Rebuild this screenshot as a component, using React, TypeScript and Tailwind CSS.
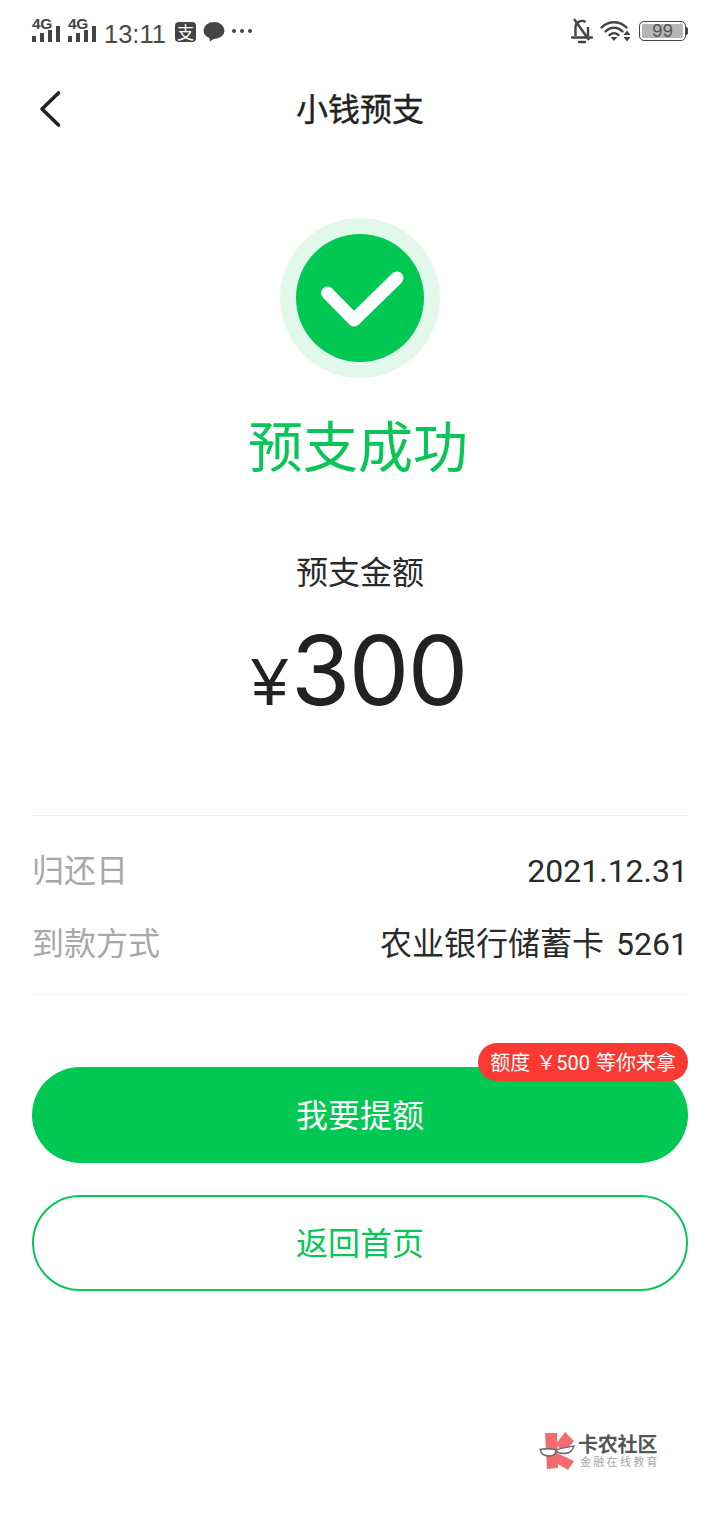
const F = "font-['Inter','Noto_Sans_CJK_SC',sans-serif]";
const R = "font-['Roboto','Noto_Sans_CJK_SC',sans-serif]";

function Signal() {
  return (
    <div className="relative w-[29px] h-[25px]">
      <span className="absolute left-0 top-[-2px] text-[15.5px] leading-[15px] font-bold text-[#444] font-['Liberation_Sans',sans-serif] tracking-[-0.3px]">4G</span>
      <svg width="29" height="25" viewBox="0 0 29 25" className="absolute left-0 top-0" fill="#444">
        <rect x="0" y="18" width="4" height="6" />
        <rect x="8" y="15" width="4" height="9" />
        <rect x="16" y="12" width="4" height="12" />
        <rect x="24" y="8" width="4" height="16" />
      </svg>
    </div>
  );
}

function StatusBar() {
  return (
    <div className="h-[64px] px-[32px] flex items-center justify-between text-[#444]">
      <div className="flex items-center">
        <div className="flex gap-[7px] mt-[-4px]">
          <Signal />
          <Signal />
        </div>
        <span className="ml-[7px] text-[25.500px] leading-[30px] mt-[3px] font-['Liberation_Sans',sans-serif] text-[#4a4a4a]">13:11</span>
        <div className="ml-[9px] mt-[-1px] w-[21px] h-[20px] rounded-[4px] bg-[#444] flex items-center justify-center text-white text-[17px] leading-none font-['Noto_Sans_CJK_SC',sans-serif]">支</div>
        <svg className="ml-[7px] mt-[-1px]" width="22" height="21" viewBox="0 0 22 21" fill="#444">
          <ellipse cx="11" cy="9.500" rx="10.500" ry="8.500" />
          <path d="M6 15l1 5.500 6-4z" />
        </svg>
        <div className="ml-[7px] flex gap-[4px] mt-[-2px]">
          <span className="w-[4px] h-[4px] rounded-full bg-[#444]" />
          <span className="w-[4px] h-[4px] rounded-full bg-[#444]" />
          <span className="w-[4px] h-[4px] rounded-full bg-[#444]" />
        </div>
      </div>
      <div className="flex items-center mt-[-2px]">
        <svg width="22" height="26" viewBox="0 0 22 26" fill="none" stroke="#444" strokeWidth="2.400">
          <path d="M4.500 18V9a6.500 6.500 0 0 1 10-5" />
          <path d="M17 9v9" />
          <path d="M1 19.500h20" strokeLinecap="round" />
          <path d="M3 1l15 21" />
          <path d="M8 24h6" strokeLinecap="round" />
        </svg>
        <svg className="ml-[7px]" width="32" height="22" viewBox="0 0 32 22" fill="none" stroke="#444" strokeWidth="2.400" strokeLinecap="round">
          <path d="M1.500 7.500c7-7 18-7 25 0" />
          <path d="M5.500 11.500c5-5 12-5 17 0" />
          <path d="M9.500 15c3-2.500 6-2.500 9 0" />
          <path d="M10.500 17h7l-3.500 4z" fill="#444" stroke="none" />
          <path d="M27 10.500l-3.500 4.500h7z" fill="#444" stroke="none" />
          <path d="M27 21.500l-3.500-4.500h7z" fill="#444" stroke="none" />
        </svg>
        <div className="ml-[7px] flex items-center">
          <div className="w-[47px] h-[20px] rounded-[5px] border-[1.5px] border-[#444] p-[2px]">
            <div className="h-full w-full bg-[#b5b5b5] rounded-[1px] flex items-center justify-center text-[17px] leading-none text-[#555] font-['Inter',sans-serif]">99</div>
          </div>
          <div className="w-[2px] h-[8px] bg-[#444] rounded-r-[2px]" />
        </div>
      </div>
    </div>
  );
}

function Row({ label, value }: { label: string; value: string }) {
  return (
    <div className="flex justify-between items-center h-[73px]">
      <span className="text-[32px] text-[#a8a8a8]">{label}</span>
      <span className={`text-[32px] text-[#2a2a2a] [word-spacing:4px] ${R}`}>{value}</span>
    </div>
  );
}

export default function App() {
  return (
    <div className={`relative w-[720px] h-[1520px] bg-white overflow-hidden ${F}`}>
      <StatusBar />
      <header className="relative h-[92px] flex items-center justify-center">
        <svg className="absolute left-[38px] top-[26px]" width="24" height="38" viewBox="0 0 24 38" fill="none" stroke="#222" strokeWidth="3.600" strokeLinecap="round" strokeLinejoin="round">
          <path d="M20.500 3L4 19l16.500 16" />
        </svg>
        <h1 className="text-[32px] font-normal text-[#222] leading-none [-webkit-text-stroke:0.4px_#222]">小钱预支</h1>
      </header>

      <div className="mt-[62px] flex flex-col items-center">
        <div className="w-[160px] h-[160px] rounded-full bg-[#e2f8ea] flex items-center justify-center">
          <div className="w-[128px] h-[128px] rounded-full bg-[#00c853] flex items-center justify-center">
            <svg width="128" height="128" viewBox="0 0 128 128" fill="none" stroke="#fff" strokeWidth="13" strokeLinecap="round" strokeLinejoin="round">
              <path d="M31.500 59L58 86 101 44" />
            </svg>
          </div>
        </div>
        <h2 className="mt-[37px] mr-[4px] text-[55px] leading-[64px] text-[#0ac557]">预支成功</h2>
        <p className="mt-[72px] text-[32px] leading-[44px] text-[#2a2a2a]">预支金额</p>
        <div className="mt-[25px] flex items-baseline text-[#222] h-[100px] leading-[100px] mr-[2px]">
          <span className="text-[66px] mr-[3px] font-['Liberation_Sans',sans-serif]">¥</span>
          <span className="text-[96px] tracking-[-1.500px]">300</span>
        </div>
      </div>

      <div className="mx-[32px] mt-[95px] border-y border-[#eeeeee] pt-[18px] pb-[14px]">
        <Row label="归还日" value="2021.12.31" />
        <Row label="到款方式" value="农业银行储蓄卡 5261" />
      </div>

      <div className="mx-[32px] mt-[72px] relative">
        <div className="h-[96px] pt-[1px] rounded-full bg-[#00c853] flex items-center justify-center text-[32px] text-white">我要提额</div>
        <div className={`absolute right-0 top-[-24px] h-[38px] pt-[1px] px-[12px] rounded-full bg-[#f93a32] text-white text-[20px] flex items-center whitespace-pre [word-spacing:1px] ${R}`}>额度 ￥500 等你来拿</div>
        <div className="mt-[32px] h-[96px] pt-[2px] rounded-full border-2 border-[#0ac557] flex items-center justify-center text-[32px] text-[#0ac557]">返回首页</div>
      </div>

      <div className="absolute left-[536px] top-[1426px] flex items-start">
        <svg width="44" height="46" viewBox="0 0 44 46">
          <path d="M9 7l12 0 1 35-11 1z" fill="#f26a72" />
          <path d="M20 18L29 6l9 9-10 12z" fill="#f26a72" />
          <path d="M21 27l17 8-6 9-12-7z" fill="#f26a72" />
          <path d="M4 23.500c5-1 11-1 16 .5 0 3-2 6-7 6-5 0-8-2-9-6.500z" fill="#fff" stroke="#666" strokeWidth="1.300" />
          <path d="M20 24c5-2 12-3 18-4-1 4-4 7-9 7.500-5 0-8-.5-9-3.500z" fill="#fff" stroke="#666" strokeWidth="1.300" />
        </svg>
        <div className="ml-[-2px] mt-[8px] flex flex-col">
          <span className="text-[20px] leading-[22px] font-bold text-[#555] tracking-[-0.2px]">卡农社区</span>
          <span className="text-[11px] leading-[13px] text-[#a8a8a8] tracking-[2.300px] ml-[2px]">金融在线教育</span>
        </div>
      </div>
    </div>
  );
}
